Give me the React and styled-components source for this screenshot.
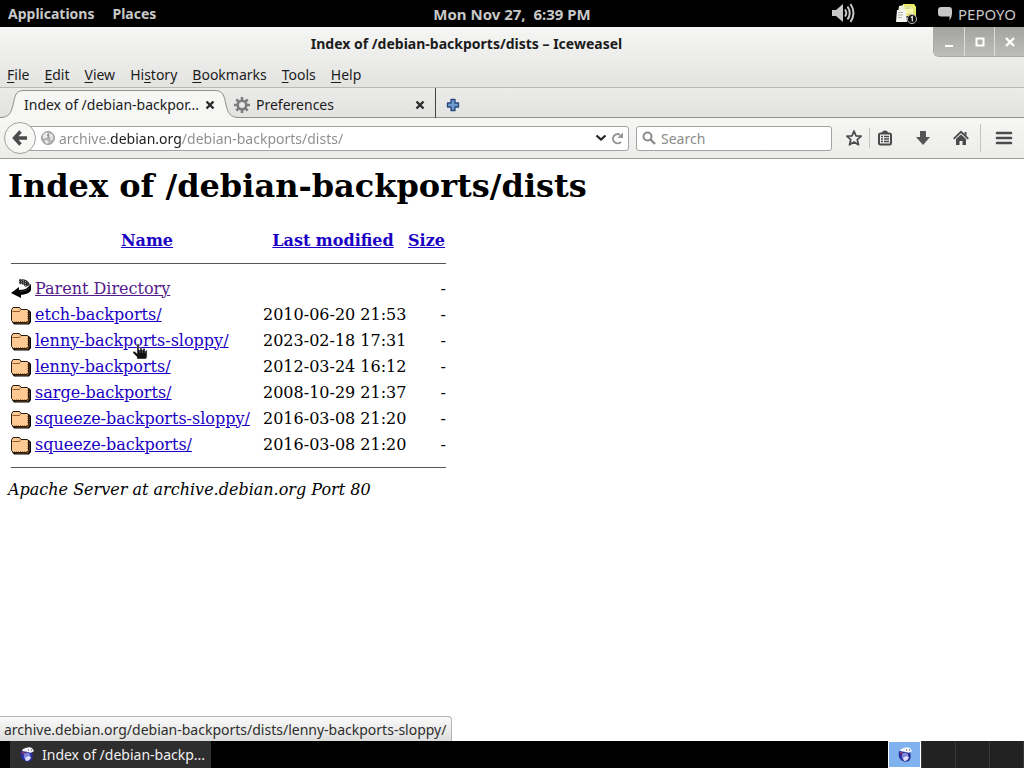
import React from "react";
import styled, { createGlobalStyle } from "styled-components";

const menus = [
  ["", "F", "ile"],
  ["", "E", "dit"],
  ["", "V", "iew"],
  ["Hi", "s", "tory"],
  ["", "B", "ookmarks"],
  ["", "T", "ools"],
  ["", "H", "elp"],
];

const dirs = [
  { name: "etch-backports/", date: "2010-06-20 21:53" },
  { name: "lenny-backports-sloppy/", date: "2023-02-18 17:31", hovered: true },
  { name: "lenny-backports/", date: "2012-03-24 16:12" },
  { name: "sarge-backports/", date: "2008-10-29 21:37" },
  { name: "squeeze-backports-sloppy/", date: "2016-03-08 21:20" },
  { name: "squeeze-backports/", date: "2016-03-08 21:20" },
];

const App = () => {
  return (
    <Desktop>
      <GlobalStyle />
      <TopPanel>
        <PanelSide>
          <PanelButton>Applications</PanelButton>
          <PanelButton>Places</PanelButton>
        </PanelSide>
        <Clock>Mon Nov 27,&nbsp; 6:39 PM</Clock>
        <PanelSide $end>
          <VolumeIcon />
          <NotesIcon />
          <UserButton>
            <ChatIcon />
            PEPOYO
          </UserButton>
        </PanelSide>
      </TopPanel>
      <Window>
        <Chrome>
          <TitleBar>
            <WindowTitle>Index of /debian-backports/dists – Iceweasel</WindowTitle>
            <WindowButtons>
              <WindowButton aria-label="Minimize">
                <svg width="10" height="10">
                  <path d="M1 9h8" stroke="#fff" strokeWidth="2" />
                </svg>
              </WindowButton>
              <WindowButton aria-label="Maximize">
                <svg width="10" height="10">
                  <rect x="1.5" y="1.5" width="7" height="7" fill="none" stroke="#fff" strokeWidth="2" />
                </svg>
              </WindowButton>
              <WindowButton aria-label="Close">
                <svg width="10" height="10">
                  <path d="M1 1l8 8M9 1l-8 8" stroke="#fff" strokeWidth="2.4" />
                </svg>
              </WindowButton>
            </WindowButtons>
          </TitleBar>
          <MenuBar>
            {menus.map(([before, key, after]) => (
              <MenuItem key={key + after}>
                {before}
                <Mnemonic>{key}</Mnemonic>
                {after}
              </MenuItem>
            ))}
          </MenuBar>
        </Chrome>
        <TabBar>
          <TabEdge width="24" height="30" viewBox="0 0 24 30">
            <path d="M0 29.5C9 29.5 11 25 13 17C15 7 16 2.5 24 2.5V30H0Z" fill="#f6f6f5" />
            <path d="M0 29.5C9 29.5 11 25 13 17C15 7 16 2.5 24 2.5" fill="none" stroke="#8f8f8c" />
          </TabEdge>
          <ActiveTab>
            <TabTitle>Index of /debian-backpor...</TabTitle>
            <CloseTab aria-label="Close tab">
              <CloseIcon />
            </CloseTab>
          </ActiveTab>
          <TabEdge width="24" height="30" viewBox="0 0 24 30">
            <path d="M24 29.5C15 29.5 13 25 11 17C9 7 8 2.5 0 2.5V30H24Z" fill="#f6f6f5" />
            <path d="M24 29.5C15 29.5 13 25 11 17C9 7 8 2.5 0 2.5" fill="none" stroke="#8f8f8c" />
          </TabEdge>
          <Tab>
            <GearIcon />
            <TabTitle>Preferences</TabTitle>
            <CloseTab aria-label="Close tab">
              <CloseIcon />
            </CloseTab>
          </Tab>
          <NewTab aria-label="New tab">
            <svg width="14" height="14" viewBox="0 0 14 14">
              <path
                d="M5 1.5h4V5h3.500v4H9v3.500H5V9H1.500V5H5Z"
                fill="#6d9bd0"
                stroke="#27477c"
                strokeWidth="1.3"
                strokeLinejoin="round"
              />
            </svg>
          </NewTab>
        </TabBar>
        <NavBar>
          <BackButton aria-label="Back">
            <svg width="16" height="16" viewBox="0 0 16 16">
              <path d="M8.5 1.5L2.500 8L8.500 14.500M3 8H15" fill="none" stroke="#4b4b4b" strokeWidth="3.4" />
            </svg>
          </BackButton>
          <UrlField>
            <GlobeIcon />
            <UrlInput aria-label="Address" defaultValue="archive.debian.org/debian-backports/dists/" />
            <FieldButton aria-label="Show history">
              <svg width="12" height="8" viewBox="0 0 12 8">
                <path d="M1.5 1.5L6 5.500L10.500 1.500" fill="none" stroke="#222" strokeWidth="2.2" />
              </svg>
            </FieldButton>
            <FieldButton aria-label="Reload">
              <svg width="13" height="13" viewBox="0 0 13 13">
                <path d="M10 9.8A4.600 4.600 0 1 1 9 2.800" fill="none" stroke="#959595" strokeWidth="2" />
                <path d="M12 .5V6H6.500Z" fill="#959595" />
              </svg>
            </FieldButton>
          </UrlField>
          <SearchField>
            <svg width="14" height="14" viewBox="0 0 14 14">
              <circle cx="5.5" cy="5.5" r="4" fill="none" stroke="#8c8c8c" strokeWidth="2" />
              <path d="M8.5 8.5L13 13" stroke="#8c8c8c" strokeWidth="2.4" />
            </svg>
            <SearchInput aria-label="Search" placeholder="Search" />
          </SearchField>
          <Tools>
            <ToolButton aria-label="Bookmark this page">
              <svg width="18" height="18" viewBox="0 0 18 18">
                <path
                  d="M9 2L11 6.800L16.200 7.200L12.200 10.600L13.500 15.800L9 13L4.500 15.800L5.800 10.600L1.800 7.200L7 6.800Z"
                  fill="none"
                  stroke="#4b4b4b"
                  strokeWidth="1.7"
                  strokeLinejoin="round"
                />
              </svg>
            </ToolButton>
            <Divider />
            <ToolButton aria-label="Show bookmarks">
              <svg width="16" height="16" viewBox="0 0 16 16">
                <rect x="2" y="3.5" width="12" height="11" rx="1.5" fill="none" stroke="#4b4b4b" strokeWidth="2" />
                <path d="M5 3a3 2.500 0 0 1 6 0Z" fill="#4b4b4b" />
                <path d="M4 6.500h2M4 9h2M4 11.500h2M7 6.500h5M7 9h5M7 11.500h5" stroke="#4b4b4b" strokeWidth="1.3" />
              </svg>
            </ToolButton>
            <ToolButton aria-label="Downloads" $spaced>
              <svg width="16" height="16" viewBox="0 0 16 16">
                <path d="M5 1h6v6h4l-7 8l-7-8h4Z" fill="#555" />
              </svg>
            </ToolButton>
            <ToolButton aria-label="Home" $spaced>
              <svg width="16" height="16" viewBox="0 0 16 16">
                <path d="M.7 8.800L8 1.800L15.300 8.800" fill="none" stroke="#4b4b4b" strokeWidth="1.8" />
                <path d="M11.500 2h2v4l-2-2Z" fill="#4b4b4b" />
                <path d="M3 9L8 4.400L13 9V15H9.500V11h-3v4H3Z" fill="#4b4b4b" />
              </svg>
            </ToolButton>
            <Divider $tall />
            <ToolButton aria-label="Open menu" $spaced>
              <svg width="18" height="14" viewBox="0 0 18 14">
                <path d="M2 2h14M2 7h14M2 12h14" stroke="#4b4b4b" strokeWidth="2.6" strokeLinecap="round" />
              </svg>
            </ToolButton>
          </Tools>
        </NavBar>
        <Page>
          <Heading>Index of /debian-backports/dists</Heading>
          <Listing>
            <colgroup>
              <Col $width={22} />
              <Col $width={226} />
              <Col $width={142} />
              <Col $width={41} />
            </colgroup>
            <thead>
              <tr>
                <HeadCell />
                <HeadCell>
                  <Link href="#name">Name</Link>
                </HeadCell>
                <HeadCell>
                  <Link href="#modified">Last modified</Link>
                </HeadCell>
                <HeadCell>
                  <Link href="#size">Size</Link>
                </HeadCell>
              </tr>
            </thead>
            <tbody>
              <tr>
                <Cell colSpan={4}>
                  <Rule />
                </Cell>
              </tr>
              <tr>
                <Cell>
                  <BackArrow />
                </Cell>
                <Cell>
                  <Link href="#parent" $visited>
                    Parent Directory
                  </Link>
                </Cell>
                <Cell />
                <Cell $right>-</Cell>
              </tr>
              {dirs.map(({ name, date, hovered }) => (
                <tr key={name}>
                  <Cell>
                    <FolderIcon />
                  </Cell>
                  <Cell>
                    <Link href={"#" + name}>{name}</Link>
                    {hovered && <Pointer />}
                  </Cell>
                  <Cell>{date}</Cell>
                  <Cell $right>-</Cell>
                </tr>
              ))}
              <tr>
                <Cell colSpan={4}>
                  <Rule />
                </Cell>
              </tr>
            </tbody>
          </Listing>
          <Signature>Apache Server at archive.debian.org Port 80</Signature>
          <LinkStatus>archive.debian.org/debian-backports/dists/lenny-backports-sloppy/</LinkStatus>
        </Page>
      </Window>
      <TaskBar>
        <TaskButton>
          <WeaselIcon />
          Index of /debian-backp...
        </TaskButton>
        <Workspaces>
          <Workspace aria-label="Workspace 1" $active>
            <WeaselIcon />
          </Workspace>
          <Workspace aria-label="Workspace 2" />
          <Workspace aria-label="Workspace 3" />
          <Workspace aria-label="Workspace 4" />
        </Workspaces>
      </TaskBar>
    </Desktop>
  );
};

export default App;

const VolumeIcon = () => (
  <svg width="24" height="22" viewBox="0 0 24 22">
    <path d="M1 7h4l7-6v18l-7-6H1Z" fill="#c8c8c8" />
    <path
      d="M14 6.500q2.500 3.500 0 7M16.500 3.500q4.500 6.500 0 13M19.500 1q6 9 0 18"
      fill="none"
      stroke="#c8c8c8"
      strokeWidth="2"
    />
  </svg>
);

const NotesIcon = () => (
  <svg width="22" height="22" viewBox="0 0 22 22">
    <path d="M8 1h11l2 3v9H8Z" fill="#eff06a" />
    <path d="M7 3h9l3 3v5h-9Z" fill="#f6f7a8" stroke="#c9ca62" strokeWidth=".6" />
    <path d="M4 3l5-1v8H3Z" fill="#f0f0dc" />
    <path d="M2 7h9l1 12H1Z" fill="#f4f4f2" />
    <path d="M3 9.500h5M3 12h5M3 14.500h4M10 5h5" stroke="#b4b4a4" />
    <circle cx="17" cy="16" r="4.6" fill="#111" stroke="#b4b4b4" />
    <path d="M15.800 14.500l1.500-1v5" fill="none" stroke="#eee" strokeWidth="1.2" />
  </svg>
);

const ChatIcon = () => (
  <svg width="16" height="16" viewBox="0 0 16 16">
    <path d="M4 1h8a3 3 0 0 1 3 3v3.500q0 4-2.500 7v-4H4a3 3 0 0 1-3-3V4a3 3 0 0 1 3-3Z" fill="#c8c8c8" />
  </svg>
);

const CloseIcon = () => (
  <svg width="10" height="10" viewBox="0 0 10 10">
    <path d="M1.500 1.500l7 7M8.500 1.500l-7 7" stroke="#2b2b2b" strokeWidth="2.4" />
  </svg>
);

const GearIcon = () => (
  <svg width="16" height="16" viewBox="0 0 16 16">
    <circle cx="8" cy="8" r="4.3" fill="none" stroke="#7c7c7c" strokeWidth="2.6" />
    <path
      d="M8 0v3M8 13v3M0 8h3M13 8h3M2.300 2.300l2.200 2.200M11.500 11.500l2.200 2.200M2.300 13.700l2.200-2.200M11.500 4.500l2.200-2.200"
      stroke="#7c7c7c"
      strokeWidth="2.6"
    />
  </svg>
);

const GlobeIcon = () => (
  <svg width="14" height="14" viewBox="0 0 14 14">
    <circle cx="7" cy="7" r="6.5" fill="#b2b2b2" stroke="#9a9a9a" />
    <path d="M2 4l3-2.500l2 .5l-1 2l1 1.500l-2.500 2L2 7Z" fill="#ededed" />
    <path d="M8.500 2l3 1.500l1 3l-1.500 3l-2-1l.5-2L7.500 5Z" fill="#e2e2e2" />
    <path d="M4 9l3 .5l1 1.500l-2 2l-2-1.500Z" fill="#e6e6e6" />
    <path d="M6 4l2-1l-.5 4Z" fill="#838383" />
  </svg>
);

const FolderIcon = () => (
  <Icon width="20" height="22" viewBox="0 0 20 22">
    <path d="M2 5h7l2 2h7l2 2v10l-2 2.500H3L1 19Z" fill="#000" />
    <path d="M17 8.500h1.500v9.500L17 20.500H4V19h12.500Z" fill="#8b5a2b" />
    <path
      d="M.5 7L2 4.500H8.500L10 6.500H16.500L17.500 8V17.500L16 19.500H2.500L.5 17.500Z"
      fill="#ffc993"
      stroke="#2a1a0a"
    />
    <path d="M1.500 8.500h6.500L9.500 7.500" fill="none" stroke="#8b5a2b" />
    <path d="M16.500 9v8.500M3 18.500h13" stroke="#c08448" strokeDasharray="1 1" />
  </Icon>
);

const BackArrow = () => (
  <Icon width="20" height="22" viewBox="0 0 20 22">
    <path d="M8 2q9-1 11 6l-5 2q0-3-6-3Z" fill="#333" />
    <path d="M8.500 2v5M10.500 2v5M12.500 3v5M14.500 4v5" stroke="#999" strokeDasharray="1 1" />
    <path d="M20 7v6q-1 4-10 5v3L0 16l8-6v3q7 0 9-3Z" fill="#000" />
    <path d="M9 14.500q6 0 10-4" fill="none" stroke="#555" strokeWidth=".6" />
  </Icon>
);

const Pointer = () => (
  <Hand width="16" height="16" viewBox="0 0 16 16">
    <path
      d="M5 1h2v6h1V5h2v2h1V5.500h2V8h1V7h1v7l-1 2H5v-2l-4-4V8.500h2l2 2Z"
      fill="#111"
      stroke="#ddd"
      strokeWidth=".5"
    />
    <path d="M8 7v3M10.500 7v3M13 8v2" stroke="#777" strokeWidth=".6" />
  </Hand>
);

const WeaselIcon = () => (
  <svg width="16" height="16" viewBox="0 0 16 16" aria-hidden="true">
    <path d="M2 4q-1 5 1 8q3 4 9 2q3-4 1-9Z" fill="#2b2f9c" />
    <path d="M5 7q3-3 6 0q1 5-4 6q-3-2-2-6Z" fill="#7f86dc" />
    <path d="M4 2q6-3 9-1l2 3q-3 3-6 1L3 4Z" fill="#f4f4fb" />
    <path d="M6 11q3-3 6-1q-1 4-5 4Z" fill="#dfe0fa" />
    <path d="M9 3h1M12 3h1" stroke="#444" />
    <path d="M3 5.500l3 1" stroke="#d1404d" />
  </svg>
);

const GlobalStyle = createGlobalStyle`
  * {
    box-sizing: border-box;
  }
  body {
    margin: 0;
    font-family: "Noto Sans", "Open Sans", sans-serif;
    font-size: 14px;
    color: #1c1c1c;
  }
  button {
    font: inherit;
    color: inherit;
    border: 0;
    padding: 0;
    background: none;
  }
  svg {
    flex: none;
  }
`;
const Desktop = styled.div`
  min-height: 100vh;
  display: flex;
  flex-direction: column;
  background: #000;
`;
const TopPanel = styled.header`
  display: grid;
  grid-template-columns: 1fr auto 1fr;
  height: 27px;
  color: #c8c8c8;
`;
const PanelSide = styled.div`
  display: flex;
  align-items: center;
  justify-content: ${(p) => (p.$end ? "flex-end" : "flex-start")};
  gap: ${(p) => (p.$end ? "40px" : "18px")};
  padding: 0 8px;
`;
const PanelButton = styled.button`
  font-weight: 700;
  white-space: nowrap;
`;
const Clock = styled(PanelButton)`
  font-size: 15px;
`;
const UserButton = styled.button`
  display: flex;
  align-items: center;
  gap: 5px;
  margin-left: -20px;
  font-size: 15px;
`;
const Window = styled.main`
  flex: 1;
  display: flex;
  flex-direction: column;
  background: #fff;
`;
const Chrome = styled.div`
  background: linear-gradient(#f6f6f4, #e3e3e1);
  border-bottom: 1px solid #b9b9b6;
`;
const TitleBar = styled.div`
  display: flex;
  height: 34px;
`;
const WindowTitle = styled.div`
  flex: 1;
  line-height: 34px;
  text-align: center;
  font-weight: 700;
`;
const WindowButtons = styled.div`
  display: flex;
  height: 30px;
  border-radius: 0 0 0 6px;
  overflow: hidden;
  border: 1px solid #a9a9a6;
  border-width: 0 0 1px 1px;
`;
const WindowButton = styled.button`
  display: flex;
  align-items: center;
  justify-content: center;
  width: 30px;
  background: linear-gradient(#a3a3a0, #bcbcb9);
  & + & {
    border-left: 1px solid #dededb;
  }
`;
const MenuBar = styled.nav`
  display: flex;
  gap: 15px;
  height: 26px;
  padding: 0 7px;
`;
const MenuItem = styled.button`
  line-height: 28px;
`;
const Mnemonic = styled.span`
  text-decoration: underline;
  text-underline-offset: 2px;
`;
const TabBar = styled.div`
  display: flex;
  height: 30px;
  background: linear-gradient(#ebebe9, #e2e2e0);
  box-shadow: inset 0 -1px #8f8f8c;
`;
const TabEdge = styled.svg`
  display: block;
`;
const Tab = styled.div`
  display: flex;
  align-items: center;
  gap: 6px;
  width: 202px;
  margin-left: -5px;
  padding: 3px 10px 0 0;
  border-right: 1px solid #444;
`;
const ActiveTab = styled.div`
  display: flex;
  align-items: center;
  width: 191px;
  padding-top: 3px;
  background: linear-gradient(#ebebe9 2px, #8f8f8c 2px, #8f8f8c 3px, #f6f6f5 3px);
`;
const TabTitle = styled.div`
  flex: 1;
  line-height: 26px;
  white-space: nowrap;
`;
const CloseTab = styled.button`
  display: flex;
`;
const NewTab = styled.button`
  display: flex;
  align-items: center;
  padding: 3px 10px 0;
`;
const NavBar = styled.div`
  display: flex;
  align-items: center;
  height: 41px;
  padding: 0 5px 0 4px;
  background: linear-gradient(#f6f6f5, #ececea);
  border-bottom: 1px solid #9c9c99;
`;
const BackButton = styled.button`
  display: flex;
  align-items: center;
  justify-content: center;
  width: 32px;
  height: 32px;
  border: 1px solid #a2a29f;
  border-radius: 50%;
  background: #f7f7f6;
  z-index: 1;
`;
const Field = styled.div`
  display: flex;
  align-items: center;
  height: 25px;
  background: #fff;
  border: 1px solid #a2a29f;
  border-radius: 3px;
`;
const UrlField = styled(Field)`
  flex: 1;
  gap: 4px;
  margin-left: -16px;
  padding: 0 4px 0 20px;
`;
const SearchField = styled(Field)`
  gap: 5px;
  width: 196px;
  margin-left: 7px;
  padding: 0 5px;
`;
const SearchInput = styled.input`
  flex: 1;
  min-width: 0;
  border: 0;
  padding: 1px 0 0;
  outline: 0;
  background: none;
  font: inherit;
  color: #1c1c1c;
  &::placeholder {
    color: #8c8c8c;
    opacity: 1;
  }
`;
/* the host name stands out from the rest of the address */
const UrlInput = styled(SearchInput)`
  background: linear-gradient(90deg, #8c8c8c 51px, #1c1c1c 51px, #1c1c1c 122px, #8c8c8c 122px);
  background-clip: text;
  -webkit-background-clip: text;
  -webkit-text-fill-color: transparent;
`;
const FieldButton = styled.button`
  display: flex;
`;
const Tools = styled.div`
  display: flex;
  align-items: center;
  padding-left: 7px;
`;
const ToolButton = styled.button`
  display: flex;
  align-items: center;
  justify-content: center;
  width: 30px;
  height: 32px;
  margin-left: ${(p) => (p.$spaced ? "8px" : "0")};
`;
const Divider = styled.div`
  width: 1px;
  height: ${(p) => (p.$tall ? "28px" : "20px")};
  margin-left: ${(p) => (p.$tall ? "4px" : "0")};
  background: #c4c4c1;
`;
const Page = styled.section`
  flex: 1;
  position: relative;
  padding: 8px 8px 40px;
  font-family: "DejaVu Serif", serif;
  font-size: 16px;
  line-height: 19px;
  color: #000;
`;
const Heading = styled.h1`
  margin: 0 0 21px;
  font-size: 32px;
  line-height: 38px;
`;
const Listing = styled.table`
  table-layout: fixed;
  width: 441px;
  border-spacing: 2px;
`;
const Col = styled.col`
  width: ${(p) => p.$width}px;
`;
const HeadCell = styled.th`
  height: 24px;
  padding: 0 1px;
  white-space: nowrap;
`;
const Cell = styled.td`
  position: relative;
  padding: 1px;
  white-space: nowrap;
  text-align: ${(p) => (p.$right ? "right" : "left")};
`;
const Icon = styled.svg`
  display: block;
`;
const Link = styled.a`
  color: ${(p) => (p.$visited ? "#551a8b" : "#1a00c4")};
`;
const Rule = styled.hr`
  height: 2px;
  margin: 8px 0;
  border: 0;
  border-top: 1px solid #555;
`;
const Signature = styled.address`
  font-style: italic;
`;
const Hand = styled.svg`
  position: absolute;
  left: 98px;
  top: 15px;
  z-index: 1;
`;
const LinkStatus = styled.div`
  position: absolute;
  left: 0;
  bottom: 0;
  padding: 2px 5px 0 4px;
  border: 1px solid #b4b4b1;
  border-width: 1px 1px 0 0;
  border-radius: 0 4px 0 0;
  background: linear-gradient(#fafafa, #dededc);
  font-family: "Noto Sans", "Open Sans", sans-serif;
  font-size: 14px;
  line-height: 22px;
  color: #2e2e2e;
`;
const TaskBar = styled.footer`
  display: flex;
  justify-content: space-between;
  height: 27px;
  padding: 0 0 0 10px;
`;
const TaskButton = styled.button`
  display: flex;
  align-items: center;
  gap: 7px;
  width: 201px;
  padding-left: 9px;
  background: #2e2e2e;
  color: #f0f0f0;
  white-space: nowrap;
`;
const Workspaces = styled.div`
  display: flex;
  gap: 1px;
  padding-right: 1px;
  background: #383838;
`;
const Workspace = styled.button`
  display: flex;
  align-items: center;
  justify-content: center;
  width: 33px;
  background: ${(p) => (p.$active ? "#7fb2ee" : "#222")};
  border: ${(p) => (p.$active ? "1px solid #fff" : "0")};
`;
